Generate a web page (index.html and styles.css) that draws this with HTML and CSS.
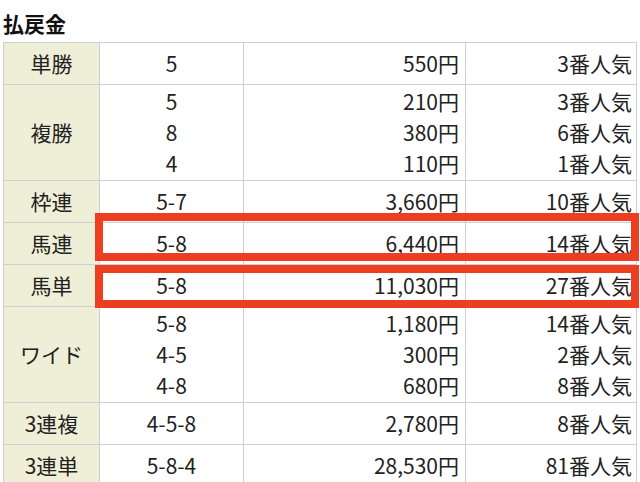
FILE: index.html
```html
<!DOCTYPE html>
<html lang="ja">
<head>
<meta charset="utf-8">
<link rel="stylesheet" href="styles.css">
</head>
<body>
<div class="page">
  <h2 class="title">払戻金</h2>
  <div class="wrap">
    <table class="pay">
      <colgroup>
        <col class="c1"><col class="c2"><col class="c3"><col class="c4">
      </colgroup>
      <tr class="one"><th>単勝</th><td class="num">5</td><td class="yen">550円</td><td class="pop">3番人気</td></tr>
      <tr><th>複勝</th><td class="num">5<br>8<br>4</td><td class="yen">210円<br>380円<br>110円</td><td class="pop">3番人気<br>6番人気<br>1番人気</td></tr>
      <tr class="one"><th>枠連</th><td class="num">5-7</td><td class="yen">3,660円</td><td class="pop">10番人気</td></tr>
      <tr class="one"><th>馬連</th><td class="num">5-8</td><td class="yen">6,440円</td><td class="pop">14番人気</td></tr>
      <tr class="one"><th>馬単</th><td class="num">5-8</td><td class="yen">11,030円</td><td class="pop">27番人気</td></tr>
      <tr><th>ワイド</th><td class="num">5-8<br>4-5<br>4-8</td><td class="yen">1,180円<br>300円<br>680円</td><td class="pop">14番人気<br>2番人気<br>8番人気</td></tr>
      <tr class="one"><th>3連複</th><td class="num">4-5-8</td><td class="yen">2,780円</td><td class="pop">8番人気</td></tr>
      <tr class="one"><th>3連単</th><td class="num">5-8-4</td><td class="yen">28,530円</td><td class="pop">81番人気</td></tr>
    </table>
    <div class="mark mark1"></div>
    <div class="mark mark2"></div>
  </div>
</div>
</body>
</html>
```
FILE: styles.css
```css
html, body {
  margin: 0;
  padding: 0;
  background: #fff;
}
.page {
  padding: 9px 0 0 3px;
  font-family: "Noto Sans CJK JP", "Noto Sans", sans-serif;
  color: #222;
}
.title {
  margin: 0 0 5px 0;
  font-size: 21px;
  font-weight: 700;
  line-height: 28px;
  color: #111;
}
.wrap {
  position: relative;
}
.pay {
  border-collapse: collapse;
  width: 633px;
  table-layout: fixed;
  font-size: 21px;
  line-height: 31px;
}
.c1 { width: 96px; }
.c2 { width: 144px; }
.c3 { width: 222px; }
.c4 { width: 171px; }
.pay th, .pay td {
  border: 1px solid #cfcfcf;
  padding: 1px 6px;
  vertical-align: middle;
}
.pay th {
  background: #efefd8;
  font-weight: 400;
  text-align: center;
}
.pay tr.one th, .pay tr.one td {
  height: 39px;
}
.num { text-align: center; }
.yen { text-align: right; }
.pop { text-align: right; padding-right: 4px !important; }
.mark {
  position: absolute;
  border: 8px solid #ee3e22;
  box-sizing: border-box;
  left: 92px;
  width: 544px;
}
.mark1 { top: 171px; height: 48px; }
.mark2 { top: 223px; height: 43px; }
```
